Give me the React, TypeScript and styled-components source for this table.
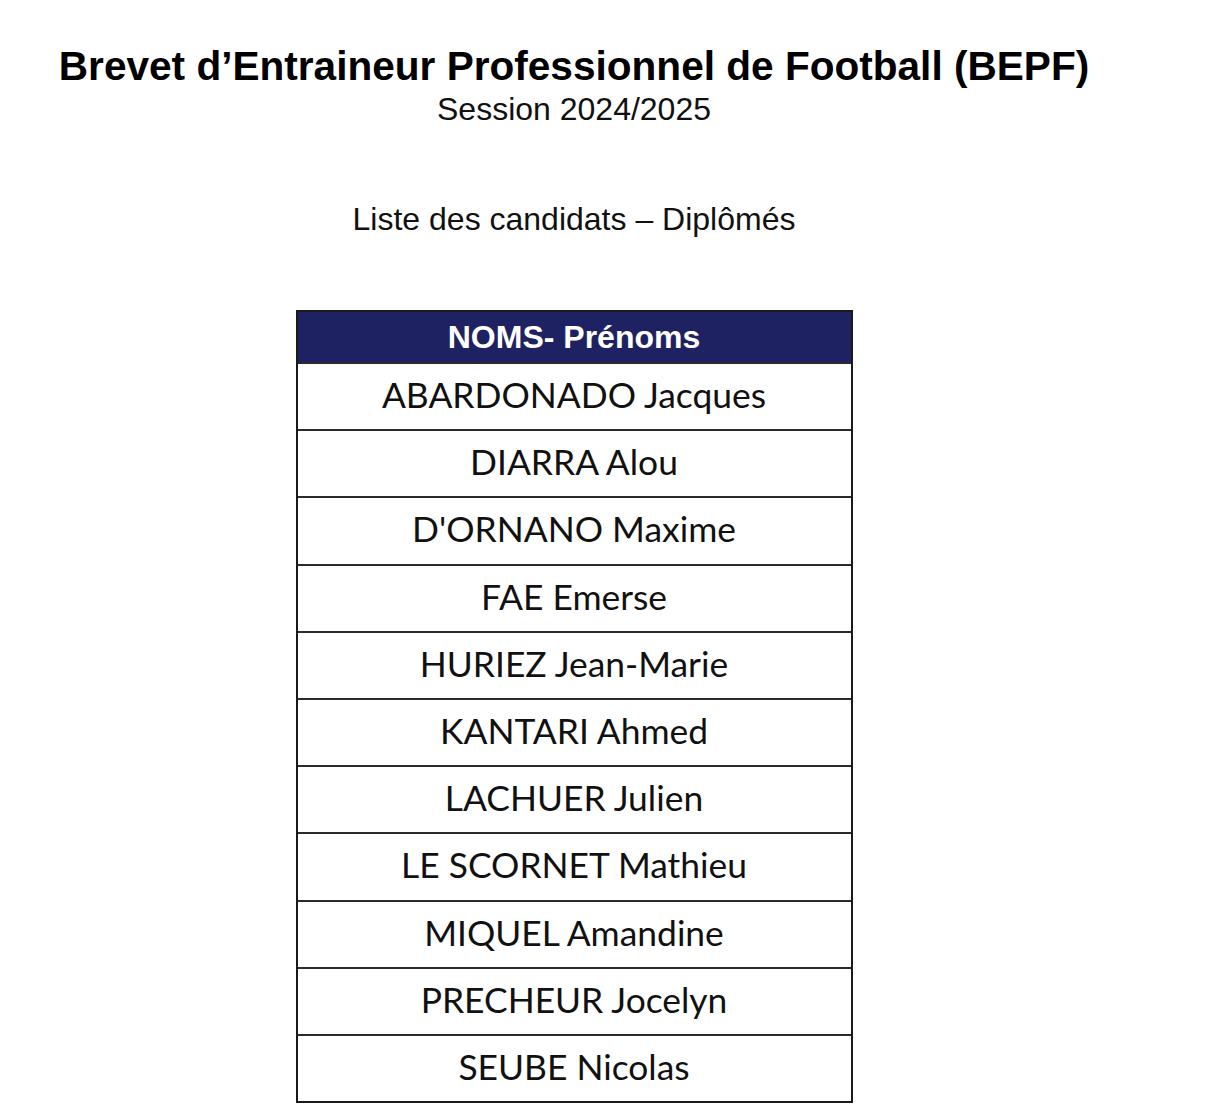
import React from "react";
import styled, { createGlobalStyle } from "styled-components";

const GlobalStyle = createGlobalStyle`
  html, body {
    margin: 0;
    padding: 0;
    background: #ffffff;
  }
  body {
    font-family: "Liberation Sans", Arial, sans-serif;
    color: #000;
  }
`;

const Page = styled.main`
  width: 1148px;
  padding-top: 43px;
  padding-bottom: 5px;
  display: flex;
  flex-direction: column;
  align-items: center;
  text-align: center;
`;

const Title = styled.h1`
  margin: 0;
  font-family: "Liberation Sans", Arial, sans-serif;
  font-weight: 700;
  font-size: 40.6px;
  line-height: 46px;
  color: #000;
  white-space: nowrap;
`;

const Subtitle = styled.div`
  margin-top: 2px;
  font-family: "Liberation Sans", Arial, sans-serif;
  font-size: 32px;
  line-height: 37px;
  color: #111;
`;

const ListHeading = styled.div`
  margin-top: 73px;
  font-family: "Liberation Sans", Arial, sans-serif;
  font-size: 32px;
  line-height: 37px;
  color: #111;
`;

const Table = styled.div`
  margin-top: 72px;
  width: 557px;
  box-sizing: border-box;
  border: 2px solid #1a1a1a;
  display: flex;
  flex-direction: column;
`;

const HeaderCell = styled.div`
  height: 50px;
  background: #1f2262;
  color: #ffffff;
  font-family: "Liberation Sans", Arial, sans-serif;
  font-weight: 700;
  font-size: 32px;
  display: flex;
  align-items: center;
  justify-content: center;
`;

const Row = styled.div`
  height: 67.2px;
  box-sizing: border-box;
  padding-bottom: 4px;
  border-top: 2px solid #2a2a2a;
  display: flex;
  align-items: center;
  justify-content: center;
  font-family: Lato, "Open Sans", sans-serif;
  font-size: 35.4px;
  color: #111;
`;

const names = [
  "ABARDONADO Jacques",
  "DIARRA Alou",
  "D'ORNANO Maxime",
  "FAE Emerse",
  "HURIEZ Jean-Marie",
  "KANTARI Ahmed",
  "LACHUER Julien",
  "LE SCORNET Mathieu",
  "MIQUEL Amandine",
  "PRECHEUR Jocelyn",
  "SEUBE Nicolas",
];

export default function App() {
  return (
    <>
      <GlobalStyle />
      <Page>
        <Title>Brevet d’Entraineur Professionnel de Football (BEPF)</Title>
        <Subtitle>Session 2024/2025</Subtitle>
        <ListHeading>Liste des candidats – Diplômés</ListHeading>
        <Table>
          <HeaderCell>NOMS- Prénoms</HeaderCell>
          {names.map((n) => (
            <Row key={n}>{n}</Row>
          ))}
        </Table>
      </Page>
    </>
  );
}
